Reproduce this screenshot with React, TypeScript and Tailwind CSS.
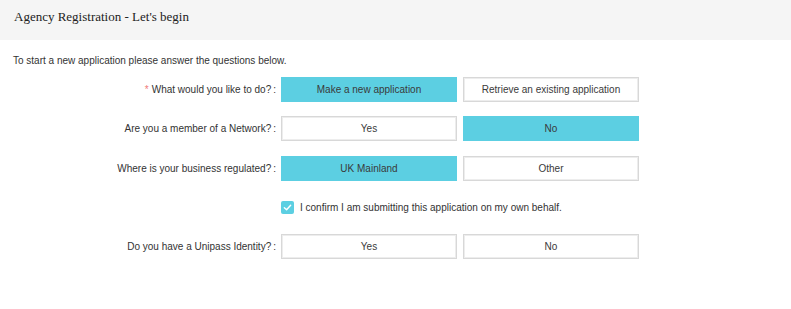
import React from "react";

const ROWS = [
  { label: "What would you like to do?", required: true, options: ["Make a new application", "Retrieve an existing application"], selected: 0, mt: "mt-0" },
  { label: "Are you a member of a Network?", options: ["Yes", "No"], selected: 1, mt: "mt-[14px]" },
  { label: "Where is your business regulated?", options: ["UK Mainland", "Other"], selected: 0, mt: "mt-[15px]" },
];

function Choice({ text, active }: { text: string; active: boolean }) {
  return (
    <button
      className={`w-[176px] h-[25px] text-[10px] text-[#3a3a3a] flex items-center justify-center border ${
        active ? "bg-[#5ccfe2] border-[#5ccfe2]" : "bg-white border-[#d8d8d8] shadow-[inset_0_0_0_1px_#ededed]"
      }`}
    >
      {text}
    </button>
  );
}

function Row({ label, required, options, selected, mt = "" }: { label: string; required?: boolean; options: string[]; selected: number; mt?: string }) {
  return (
    <div className={`flex items-center ${mt}`}>
      <div className="w-[268px] pr-[5px] text-right text-[10px] text-[#333]">
        {required && <span className="text-[#f07a7a] mr-[3px]">*</span>}
        {label}
        <span className="ml-[2px]">:</span>
      </div>
      <div className="flex gap-[6px]">
        {options.map((o, i) => (
          <Choice key={i} text={o} active={i === selected} />
        ))}
      </div>
    </div>
  );
}

export default function App() {
  return (
    <div className="w-[791px] h-[309px] bg-white font-['Liberation_Sans',Arial,sans-serif]">
      <header className="h-[40px] bg-[#f5f5f5] px-[14px] pt-[9px]">
        <h1 className="font-['Liberation_Serif','Times_New_Roman',serif] text-[13px] leading-[16px] text-[#222]">Agency Registration - Let's begin</h1>
      </header>

      <div className="px-[13px] pt-[14px]">
        <p className="text-[10px] text-[#333] leading-[13px]">To start a new application please answer the questions below.</p>

        <div className="mt-[10px] flex flex-col">
          {ROWS.map((r, i) => (
            <Row key={i} {...r} />
          ))}
        </div>

        <div className="mt-[20px] h-[13px] flex items-center pl-[268px] gap-[6px]">
          <span className="w-[13px] h-[13px] rounded-[2px] bg-[#5ccfe2] flex items-center justify-center">
            <svg width="9" height="9" viewBox="0 0 10 10" fill="none">
              <path d="M1.5 5.2 L4 7.5 L8.5 2.5" stroke="white" strokeWidth="1.6" strokeLinecap="round" strokeLinejoin="round" />
            </svg>
          </span>
          <span className="text-[10px] text-[#333]">I confirm I am submitting this application on my own behalf.</span>
        </div>

        <div className="mt-[20px]">
          <Row label="Do you have a Unipass Identity?" options={["Yes", "No"]} selected={-1} />
        </div>
      </div>
    </div>
  );
}
